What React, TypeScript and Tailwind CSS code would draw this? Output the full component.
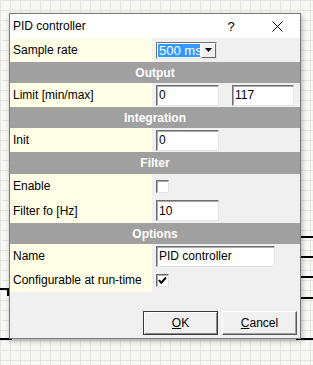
import React from "react";

function TextBox({ value, w }: { value: string; w: string }) {
  return (
    <div
      className={`${w} h-[21px] bg-white border border-t-[#6f6f6f] border-l-[#6f6f6f] border-r-[#e3e3e3] border-b-[#e3e3e3] shadow-[inset_1px_1px_0_#a9a9a9] flex items-center pl-[2px] leading-none`}
    >
      {value}
    </div>
  );
}

function CheckBox({ checked }: { checked?: boolean }) {
  return (
    <div className="w-[13px] h-[13px] bg-white border border-t-[#6f6f6f] border-l-[#6f6f6f] border-r-[#e3e3e3] border-b-[#e3e3e3] shadow-[inset_1px_1px_0_#a9a9a9] flex items-center justify-center">
      {checked && (
        <svg width="9" height="9" viewBox="0 0 9 9">
          <polyline points="1,4 3.2,6.8 8,1.5" fill="none" stroke="#000" strokeWidth="2" />
        </svg>
      )}
    </div>
  );
}

function Row({ label, children, h = "h-[24px]" }: { label: string; children?: React.ReactNode; h?: string }) {
  return (
    <div className={`flex ${h}`}>
      <div className="w-[142px] bg-[#ffffe8] pl-[3px] flex items-center leading-none">{label}</div>
      <div className="flex-1 pl-[4px] flex items-center">{children}</div>
    </div>
  );
}

function Header({ title, h = "h-[21px]" }: { title: string; h?: string }) {
  return (
    <div className={`${h} bg-[#a0a0a0] text-white font-bold flex items-center justify-center leading-none`}>
      {title}
    </div>
  );
}

export default function App() {
  return (
    <div className="relative w-[313px] h-[365px] overflow-hidden bg-[#f7f7f4] bg-[linear-gradient(to_right,#e4e4e0_1px,transparent_1px),linear-gradient(to_bottom,#e4e4e0_1px,transparent_1px)] bg-[size:10px_10px] font-['Liberation_Sans',Arial,sans-serif] text-[12px] text-black">
      {/* wires on the canvas */}
      <div className="absolute left-[296px] top-[236px] w-[17px] h-[2px] bg-black" />
      <div className="absolute left-[296px] top-[256px] w-[17px] h-[2px] bg-black" />
      <div className="absolute left-[296px] top-[276px] w-[17px] h-[2px] bg-black" />
      <div className="absolute left-[296px] top-[297px] w-[17px] h-[2px] bg-black" />
      <div className="absolute left-[296px] top-[338px] w-[17px] h-[2px] bg-black" />
      <div className="absolute left-0 top-[288px] w-[9px] h-[2px] bg-black" />
      <div className="absolute left-[7px] top-[288px] w-[2px] h-[8px] bg-black" />
      <div className="absolute left-0 top-[338px] w-[12px] h-[2px] bg-black" />

      {/* dialog window */}
      <div className="absolute left-[9px] top-[13px] w-[292px] h-[326px] border border-[#7a7a7a] bg-[#f0f0f0] shadow-[1px_2px_5px_rgba(0,0,0,0.3)] flex flex-col">
        <div className="h-[24px] bg-white flex items-center">
          <div className="flex-1 pl-[3px] leading-none">PID controller</div>
          <div className="w-[46px] flex justify-center leading-none text-[13px]">?</div>
          <div className="w-[46px] flex justify-center">
            <svg width="11" height="11" viewBox="0 0 11 11">
              <path d="M0.5 0.5 L10.5 10.5 M10.5 0.5 L0.5 10.5" stroke="#000" strokeWidth="1" />
            </svg>
          </div>
        </div>

        <Row label="Sample rate">
          <div className="w-[61px] h-[17px] bg-white border border-t-[#6f6f6f] border-l-[#6f6f6f] border-r-[#e3e3e3] border-b-[#e3e3e3] flex">
            <div className="w-[44px] overflow-hidden p-[1px] flex">
              <div className="flex-1 bg-[#3399ff] text-white text-[13px] leading-[13px] pl-[1px] whitespace-nowrap overflow-hidden">500 ms</div>
            </div>
            <div className="flex-1 bg-[#f0f0f0] border border-t-white border-l-white border-r-[#696969] border-b-[#696969] flex items-center justify-center">
              <svg width="7" height="4" viewBox="0 0 7 4">
                <polygon points="0,0 7,0 3.5,4" fill="#000" />
              </svg>
            </div>
          </div>
        </Row>

        <Header title="Output" />
        <Row label="Limit [min/max]">
          <TextBox value="0" w="w-[63px]" />
          <div className="w-[13px]" />
          <TextBox value="117" w="w-[62px]" />
        </Row>

        <Header title="Integration" />
        <Row label="Init">
          <TextBox value="0" w="w-[63px]" />
        </Row>

        <Header title="Filter" h="h-[22px]" />
        <Row label="Enable">
          <CheckBox />
        </Row>
        <Row label="Filter fo [Hz]" h="h-[25px]">
          <TextBox value="10" w="w-[63px]" />
        </Row>

        <Header title="Options" />
        <Row label="Name">
          <TextBox value="PID controller" w="w-[119px]" />
        </Row>
        <Row label="Configurable at run-time">
          <CheckBox checked />
        </Row>

        <div className="flex-1 flex items-end justify-end gap-[4px] pr-[3px] pb-[3px]">
          <div className="w-[75px] h-[24px] bg-[#f0f0f0] border border-[#3a3a3a] shadow-[inset_1px_1px_0_#ffffff,inset_-1px_-1px_0_#8a8a8a] flex items-center justify-center leading-none">
            <span><span className="underline">O</span>K</span>
          </div>
          <div className="w-[75px] h-[24px] bg-[#f0f0f0] border border-t-white border-l-white border-r-[#5a5a5a] border-b-[#5a5a5a] shadow-[inset_-1px_-1px_0_#a0a0a0] flex items-center justify-center leading-none">
            <span><span className="underline">C</span>ancel</span>
          </div>
        </div>
      </div>
    </div>
  );
}
